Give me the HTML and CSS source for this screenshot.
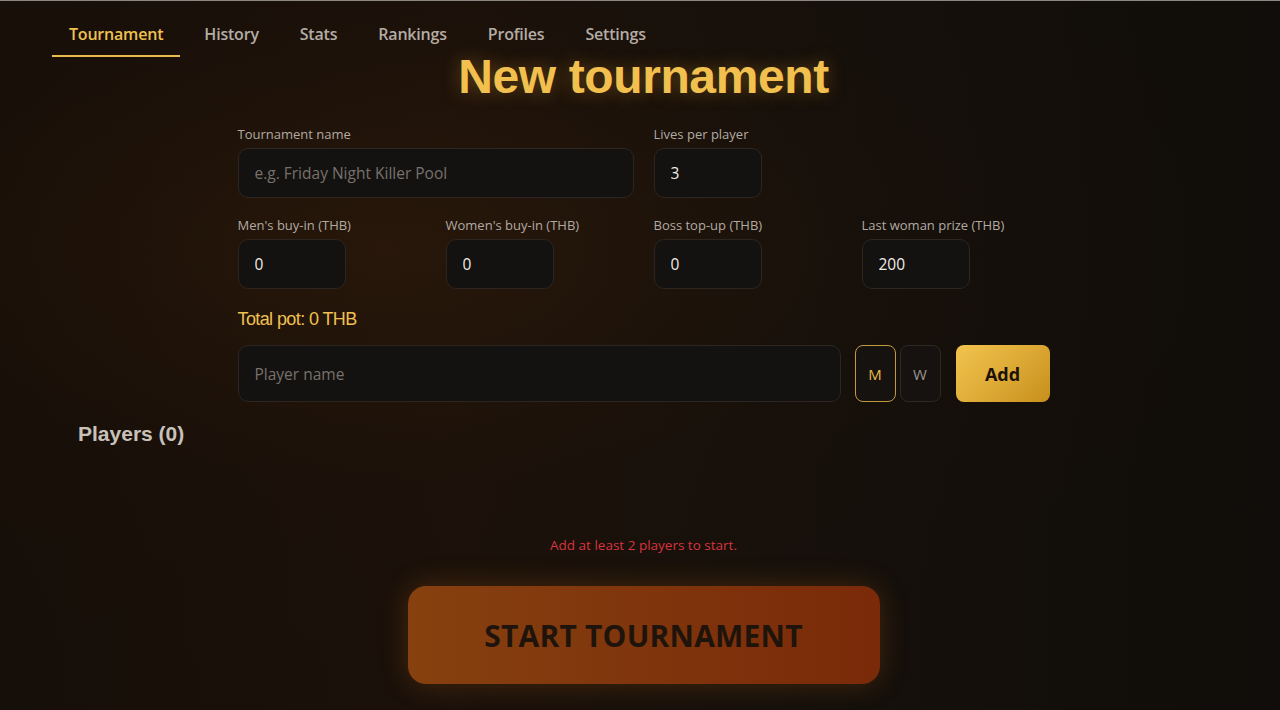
FILE: index.html
```html
<!DOCTYPE html>
<html lang="en">
<head>
<meta charset="utf-8">
<title>New tournament</title>
<link rel="stylesheet" href="styles.css">
</head>
<body>
<nav class="tabs">
  <a class="tab active">Tournament</a>
  <a class="tab">History</a>
  <a class="tab">Stats</a>
  <a class="tab">Rankings</a>
  <a class="tab">Profiles</a>
  <a class="tab">Settings</a>
</nav>
<main class="main">
  <h1 class="title">New tournament</h1>
  <section class="form">
    <div class="grid">
      <label class="field span2">
        <span class="label">Tournament name</span>
        <input class="input" type="text" placeholder="e.g. Friday Night Killer Pool">
      </label>
      <label class="field">
        <span class="label">Lives per player</span>
        <input class="input small" type="text" value="3">
      </label>
      <div></div>
      <label class="field">
        <span class="label">Men's buy-in (THB)</span>
        <input class="input small" type="text" value="0">
      </label>
      <label class="field">
        <span class="label">Women's buy-in (THB)</span>
        <input class="input small" type="text" value="0">
      </label>
      <label class="field">
        <span class="label">Boss top-up (THB)</span>
        <input class="input small" type="text" value="0">
      </label>
      <label class="field">
        <span class="label">Last woman prize (THB)</span>
        <input class="input small" type="text" value="200">
      </label>
    </div>
    <div class="pot">Total pot: 0 THB</div>
    <div class="player-row">
      <input class="input player" type="text" placeholder="Player name">
      <div class="sex">
        <button class="sex-btn on">M</button>
        <button class="sex-btn">W</button>
      </div>
      <button class="add">Add</button>
    </div>
  </section>
  <h2 class="players">Players (0)</h2>
  <p class="error">Add at least 2 players to start.</p>
  <div class="start-wrap">
    <button class="start">START TOURNAMENT</button>
  </div>
</main>
</body>
</html>
```

FILE: styles.css
```css
* { box-sizing: border-box; }

html, body { height: 100%; }

body {
  margin: 0;
  border-top: 1px solid #8c8782;
  min-height: 710px;
  font-family: "Open Sans", "Noto Sans", sans-serif;
  color: #e8e2dc;
  background:
    radial-gradient(ellipse 70% 60% at 30% 35%, rgba(50, 28, 10, 0.55) 0%, rgba(30, 18, 8, 0.2) 55%, rgba(0, 0, 0, 0) 100%),
    linear-gradient(90deg, #160e08 0%, #1b110a 35%, #15100b 65%, #100d0a 100%);
  overflow: hidden;
}

.tabs {
  display: flex;
  gap: 7px;
  padding: 13px 0 0 52px;
}

.tab {
  padding: 9px 17px 10px;
  font-size: 16px;
  line-height: 22px;
  font-weight: 600;
  color: #b4aca4;
  border-bottom: 2px solid transparent;
  letter-spacing: -0.2px;
}

.tab.active {
  color: #f0c050;
  border-bottom-color: #e9bb4c;
}

.main {
  margin: 0 71px 0 78px;
}

.title {
  margin: 0;
  text-align: center;
  font-family: "Liberation Sans", Arial, sans-serif;
  font-weight: 700;
  font-size: 48px;
  line-height: 40px;
  letter-spacing: -0.4px;
  color: #f2c04e;
  text-shadow: 0 0 18px rgba(240, 170, 50, 0.35);
}

.form {
  width: 812px;
  margin: 28px auto 0;
}

.grid {
  display: grid;
  grid-template-columns: repeat(4, 188px);
  column-gap: 20px;
  row-gap: 18px;
}

.field {
  display: flex;
  flex-direction: column;
  gap: 5px;
}

.span2 { grid-column: span 2; }

.label {
  font-size: 13px;
  line-height: 18px;
  color: #b2aaa2;
}

.input {
  height: 50px;
  padding: 0 16px;
  border: 1px solid #2d2520;
  border-radius: 10px;
  background: #141210;
  color: #f0ece8;
  font-family: "Open Sans", "Noto Sans", sans-serif;
  font-size: 15.5px;
  outline: none;
}

.input::placeholder { color: #77716b; }

.input.small { width: 108px; }

.pot {
  margin-top: 20px;
  font-family: "Liberation Sans Narrow", "Liberation Sans", Arial, sans-serif;
  font-size: 18px;
  line-height: 20px;
  color: #f0c050;
  letter-spacing: -0.6px;
}

.player-row {
  display: flex;
  align-items: stretch;
  margin-top: 16px;
  height: 57px;
}

.input.player {
  flex: 1;
  height: 57px;
}

.sex {
  display: flex;
  gap: 4px;
  margin-left: 14px;
}

.sex-btn {
  width: 41px;
  border: 1px solid #2e2924;
  border-radius: 8px;
  background: #15120f;
  color: #9a948e;
  font-family: "Open Sans", "Noto Sans", sans-serif;
  font-size: 15px;
  padding: 0;
}

.sex-btn.on {
  border-color: #c49a40;
  color: #eab84a;
}

.add {
  width: 94px;
  margin-left: 15px;
  border: none;
  border-radius: 8px;
  background: linear-gradient(135deg, #f1c44e 0%, #dca834 55%, #c78f1c 100%);
  color: #1c1208;
  font-family: "Open Sans", "Noto Sans", sans-serif;
  font-weight: 700;
  font-size: 18px;
}

.players {
  margin: 20px 0 0;
  font-family: "Liberation Sans", Arial, sans-serif;
  font-weight: 700;
  font-size: 21px;
  line-height: 24px;
  color: #c8c1ba;
}

.error {
  margin: 90px 0 0;
  text-align: center;
  font-size: 13.5px;
  line-height: 18px;
  color: #d8343e;
}

.start-wrap {
  display: flex;
  justify-content: center;
  margin-top: 32px;
}

.start {
  width: 472px;
  height: 98px;
  border: none;
  border-radius: 18px;
  background: linear-gradient(90deg, #86410f 0%, #80350c 50%, #7a2a09 100%);
  color: #1e140b;
  font-family: "Open Sans", "Noto Sans", sans-serif;
  font-weight: 700;
  font-size: 30px;
  letter-spacing: 0.2px;
  box-shadow: 0 0 28px rgba(190, 100, 20, 0.28);
}
```
